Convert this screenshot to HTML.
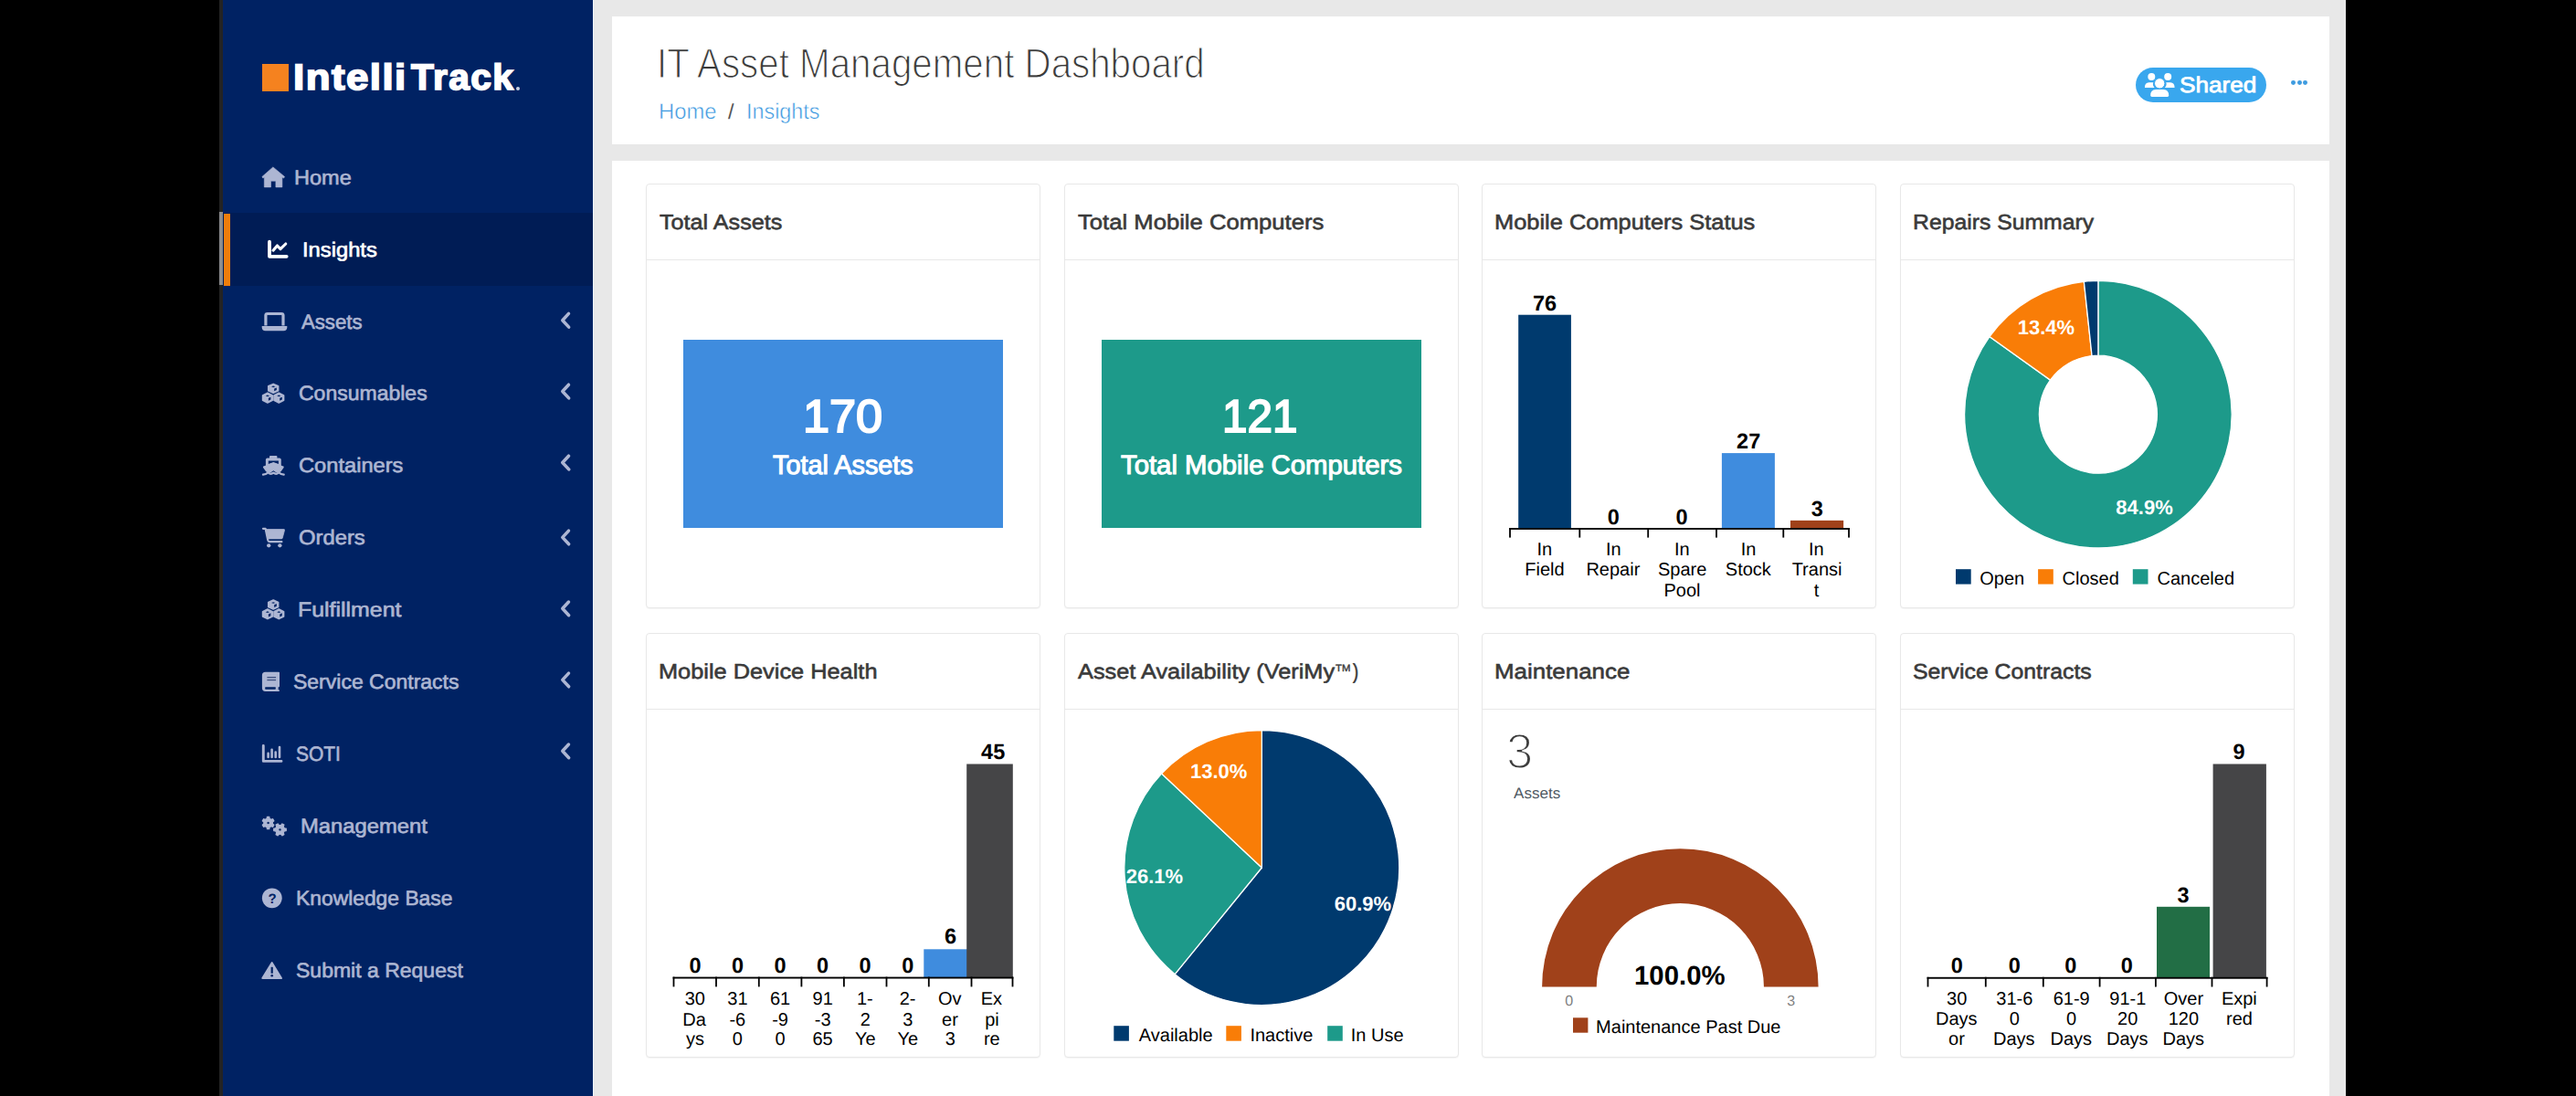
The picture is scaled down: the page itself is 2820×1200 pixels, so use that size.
<!DOCTYPE html>
<html lang="en"><head><meta charset="utf-8"><title>IT Asset Management Dashboard</title>
<style>
html,body{margin:0;padding:0;}
body{width:2820px;height:1200px;background:#000;position:relative;overflow:hidden;font-family:"Liberation Sans",sans-serif;text-rendering:geometricPrecision;}
.a{position:absolute;}
.t{position:absolute;white-space:nowrap;line-height:1;transform-origin:0 0;display:block;}
.card{position:absolute;box-sizing:border-box;background:#fff;border:1px solid #e8e8e8;border-radius:4px;width:432px;height:465px;box-shadow:0 1px 1px rgba(0,0,0,0.04);}
.card .hd{position:absolute;left:0;right:0;top:0;height:82px;border-bottom:1px solid #e8e8e8;}
svg text{font-family:"Liberation Sans",sans-serif;}
</style></head><body>
<div class="a" style="left:240px;top:0;width:4px;height:1200px;background:#232323;"></div>
<div class="a" style="left:240px;top:232px;width:4.5px;height:80px;background:#8c8c8e;"></div>
<div class="a" id="sidebar" style="left:244px;top:0;width:405px;height:1200px;background:#002263;"></div>
<div class="a" style="left:244px;top:233px;width:405px;height:79.5px;background:#001c55;"></div>
<div class="a" style="left:244.5px;top:233.5px;width:7.5px;height:79px;background:#ee7d0c;"></div>
<div class="a" id="content" style="left:649px;top:0;width:1919px;height:1200px;background:#e8e8e8;"></div>
<div class="a" style="left:649px;top:0;width:1.2px;height:1200px;background:#eef3fb;"></div>
<div class="a" id="header" style="left:670px;top:18px;width:1880px;height:140px;background:#fff;"></div>
<div class="a" id="panel" style="left:670px;top:176px;width:1880px;height:1024px;background:#fff;"></div>
<div class="a" style="left:287px;top:70px;width:29px;height:29.5px;background:#f5821f;"></div>
<span class="t " style="left:321.30px;top:66px;font-size:39.7px;color:#fff;font-weight:700;letter-spacing:1.3px;-webkit-text-stroke:1.7px #fff;transform:scaleX(1.1058);">Intelli</span>
<span class="t " style="left:450.44px;top:66px;font-size:39.7px;color:#fff;font-weight:700;letter-spacing:1.3px;-webkit-text-stroke:1.7px #fff;transform:scaleX(1.0266);">Track</span>
<div class="a" style="left:564.6px;top:94.8px;width:4.6px;height:4.6px;border-radius:50%;background:#c9d0e3;"></div>
<span class="t " style="left:321.54px;top:184px;font-size:22.4px;color:#adb6d2;-webkit-text-stroke:0.65px #adb6d2;transform:scaleX(1.0519);">Home</span>
<span class="t " style="left:330.99px;top:263px;font-size:22.4px;color:#fff;-webkit-text-stroke:0.65px #fff;transform:scaleX(1.0603);">Insights</span>
<span class="t " style="left:330.12px;top:342px;font-size:22.4px;color:#adb6d2;-webkit-text-stroke:0.65px #adb6d2;transform:scaleX(0.9900);">Assets</span>
<span class="t " style="left:326.77px;top:420px;font-size:22.4px;color:#adb6d2;-webkit-text-stroke:0.65px #adb6d2;transform:scaleX(1.0272);">Consumables</span>
<span class="t " style="left:326.74px;top:499px;font-size:22.4px;color:#adb6d2;-webkit-text-stroke:0.65px #adb6d2;transform:scaleX(1.0569);">Containers</span>
<span class="t " style="left:326.85px;top:578px;font-size:22.4px;color:#adb6d2;-webkit-text-stroke:0.65px #adb6d2;transform:scaleX(1.0632);">Orders</span>
<span class="t " style="left:325.93px;top:657px;font-size:22.4px;color:#adb6d2;-webkit-text-stroke:0.65px #adb6d2;transform:scaleX(1.1121);">Fulfillment</span>
<span class="t " style="left:321.39px;top:736px;font-size:22.4px;color:#adb6d2;-webkit-text-stroke:0.65px #adb6d2;transform:scaleX(1.0269);">Service Contracts</span>
<span class="t " style="left:324.08px;top:815px;font-size:22.4px;color:#adb6d2;-webkit-text-stroke:0.65px #adb6d2;transform:scaleX(0.9366);">SOTI</span>
<span class="t " style="left:328.92px;top:894px;font-size:22.4px;color:#adb6d2;-webkit-text-stroke:0.65px #adb6d2;transform:scaleX(1.0633);">Management</span>
<span class="t " style="left:323.50px;top:973px;font-size:22.4px;color:#adb6d2;-webkit-text-stroke:0.65px #adb6d2;transform:scaleX(1.0202);">Knowledge Base</span>
<span class="t " style="left:323.69px;top:1052px;font-size:22.4px;color:#adb6d2;-webkit-text-stroke:0.65px #adb6d2;transform:scaleX(1.0272);">Submit a Request</span>
<span class="t " style="left:718.95px;top:47px;font-size:45.8px;color:#3a3a3a;-webkit-text-stroke:1.25px #fff;transform:scaleX(0.8801);">IT Asset Management Dashboard</span>
<span class="t " style="left:720.84px;top:111px;font-size:24.0px;color:#3c98e0;-webkit-text-stroke:0.5px #fff;transform:scaleX(0.9925);">Home</span>
<span class="t " style="left:797.00px;top:111px;font-size:23.3px;color:#555;">/</span>
<span class="t " style="left:816.65px;top:111px;font-size:24.0px;color:#3c98e0;-webkit-text-stroke:0.5px #fff;transform:scaleX(0.9726);">Insights</span>
<div class="a" style="left:2338px;top:74px;width:142.5px;height:37.7px;border-radius:19px;background:#39a7ee;"></div>
<span class="t " style="left:2386.12px;top:82px;font-size:23.8px;color:#fff;-webkit-text-stroke:0.8px #fff;transform:scaleX(1.0993);">Shared</span>
<div class="a" style="left:2508.05px;top:88.2px;width:4.9px;height:4.9px;border-radius:50%;background:#3f9ce0;"></div>
<div class="a" style="left:2514.65px;top:88.2px;width:4.9px;height:4.9px;border-radius:50%;background:#3f9ce0;"></div>
<div class="a" style="left:2521.3500000000004px;top:88.2px;width:4.9px;height:4.9px;border-radius:50%;background:#3f9ce0;"></div>
<div class="card" style="left:707px;top:201px;"><div class="hd"></div></div>
<span class="t " style="left:722.00px;top:232px;font-size:23.1px;color:#3a3a3a;-webkit-text-stroke:0.6px #3a3a3a;transform:scaleX(1.0904);">Total Assets</span>
<div class="card" style="left:1165px;top:201px;"><div class="hd"></div></div>
<span class="t " style="left:1179.79px;top:232px;font-size:23.1px;color:#3a3a3a;-webkit-text-stroke:0.6px #3a3a3a;transform:scaleX(1.1102);">Total Mobile Computers</span>
<div class="card" style="left:1622px;top:201px;"><div class="hd"></div></div>
<span class="t " style="left:1635.97px;top:232px;font-size:23.1px;color:#3a3a3a;-webkit-text-stroke:0.6px #3a3a3a;transform:scaleX(1.1004);">Mobile Computers Status</span>
<div class="card" style="left:2080px;top:201px;"><div class="hd"></div></div>
<span class="t " style="left:2093.82px;top:232px;font-size:23.1px;color:#3a3a3a;-webkit-text-stroke:0.6px #3a3a3a;transform:scaleX(1.0719);">Repairs Summary</span>
<div class="card" style="left:707px;top:693px;"><div class="hd"></div></div>
<span class="t " style="left:720.87px;top:724px;font-size:23.1px;color:#3a3a3a;-webkit-text-stroke:0.6px #3a3a3a;transform:scaleX(1.0975);">Mobile Device Health</span>
<div class="card" style="left:1165px;top:693px;"><div class="hd"></div></div>
<span class="t " style="left:1179.90px;top:724px;font-size:23.1px;color:#3a3a3a;-webkit-text-stroke:0.6px #3a3a3a;transform:scaleX(1.0968);">Asset Availability (VeriMy</span>
<span class="t " style="left:1462.27px;top:727px;font-size:10.6px;color:#3a3a3a;-webkit-text-stroke:0.4px #3a3a3a;transform:scaleX(1.0701);">TM</span>
<span class="t " style="left:1480.91px;top:724px;font-size:23.1px;color:#3a3a3a;-webkit-text-stroke:0.6px #3a3a3a;transform:scaleX(0.8005);">)</span>
<div class="card" style="left:1622px;top:693px;"><div class="hd"></div></div>
<span class="t " style="left:1635.93px;top:724px;font-size:23.1px;color:#3a3a3a;-webkit-text-stroke:0.6px #3a3a3a;transform:scaleX(1.1217);">Maintenance</span>
<div class="card" style="left:2080px;top:693px;"><div class="hd"></div></div>
<span class="t " style="left:2093.78px;top:724px;font-size:23.1px;color:#3a3a3a;-webkit-text-stroke:0.6px #3a3a3a;transform:scaleX(1.0742);">Service Contracts</span>
<div class="a" style="left:748px;top:372px;width:350px;height:206px;background:#3f8cde;"></div>
<span class="t " style="left:879.28px;top:431px;font-size:50.4px;color:#fff;-webkit-text-stroke:2.0px #fff;transform:scaleX(1.0361);">170</span>
<span class="t " style="left:846.47px;top:495px;font-size:29.4px;color:#fff;-webkit-text-stroke:1.1px #fff;transform:scaleX(0.9805);">Total Assets</span>
<div class="a" style="left:1206px;top:372px;width:349.5px;height:206px;background:#1d9a8a;"></div>
<span class="t " style="left:1337.70px;top:431px;font-size:50.4px;color:#fff;-webkit-text-stroke:2.0px #fff;transform:scaleX(0.9799);">121</span>
<span class="t " style="left:1227.26px;top:495px;font-size:29.4px;color:#fff;-webkit-text-stroke:1.1px #fff;transform:scaleX(0.9976);">Total Mobile Computers</span>
<span class="t " style="left:1649.29px;top:797px;font-size:53.9px;color:#3d3d3d;-webkit-text-stroke:2.0px #fff;transform:scaleX(0.9765);">3</span>
<span class="t " style="left:1657.40px;top:861px;font-size:16.7px;color:#505a64;transform:scaleX(1.0239);">Assets</span>
<svg class="a" style="left:0;top:0;" width="2820" height="1200" viewBox="0 0 2820 1200">
<rect x="1662.20" y="344.70" width="57.70" height="233.80" fill="#003a6e"/>
<rect x="1884.90" y="496.10" width="58.00" height="82.40" fill="#3f8cde"/>
<rect x="1960.00" y="569.85" width="58.10" height="8.65" fill="#a0411a"/>
<rect x="1652.10" y="578.00" width="372.80" height="1.90" fill="#000"/>
<rect x="1652.10" y="578.00" width="1.80" height="10.60" fill="#000"/>
<rect x="1728.40" y="578.00" width="1.80" height="10.60" fill="#000"/>
<rect x="1803.30" y="578.00" width="1.80" height="10.60" fill="#000"/>
<rect x="1878.10" y="578.00" width="1.80" height="10.60" fill="#000"/>
<rect x="1951.40" y="578.00" width="1.80" height="10.60" fill="#000"/>
<rect x="2023.10" y="578.00" width="1.80" height="10.60" fill="#000"/>
<text x="1678.00" y="339.80" font-size="23.5" fill="#000" font-weight="700">76</text>
<text x="1759.68" y="573.80" font-size="23.5" fill="#000" font-weight="700">0</text>
<text x="1834.38" y="573.80" font-size="23.5" fill="#000" font-weight="700">0</text>
<text x="1901.12" y="490.70" font-size="23.5" fill="#000" font-weight="700">27</text>
<text x="1982.70" y="564.75" font-size="23.5" fill="#000" font-weight="700">3</text>
<text x="1682.50" y="607.60" font-size="20" fill="#000">In</text>
<text x="1669.30" y="630.00" font-size="20" fill="#000">Field</text>
<text x="1757.90" y="607.60" font-size="20" fill="#000">In</text>
<text x="1736.40" y="630.00" font-size="20" fill="#000">Repair</text>
<text x="1833.00" y="607.60" font-size="20" fill="#000">In</text>
<text x="1814.95" y="630.00" font-size="20" fill="#000">Spare</text>
<text x="1821.45" y="652.60" font-size="20" fill="#000">Pool</text>
<text x="1905.70" y="607.60" font-size="20" fill="#000">In</text>
<text x="1888.85" y="630.00" font-size="20" fill="#000">Stock</text>
<text x="1980.00" y="607.60" font-size="20" fill="#000">In</text>
<text x="1961.65" y="630.00" font-size="20" fill="#000">Transi</text>
<text x="1985.75" y="652.60" font-size="20" fill="#000">t</text>
<path d="M2296.90,307.40A146.3,146.3 0 1 1 2177.94,368.54L2244.46,416.15A64.5,64.5 0 1 0 2296.90,389.20Z" fill="#1d9a8a" stroke="#fff" stroke-width="1.3"/>
<path d="M2177.94,368.54A146.3,146.3 0 0 1 2281.35,308.23L2290.05,389.57A64.5,64.5 0 0 0 2244.46,416.15Z" fill="#f97d07" stroke="#fff" stroke-width="1.3"/>
<path d="M2281.35,308.23A146.3,146.3 0 0 1 2296.90,307.40L2296.90,389.20A64.5,64.5 0 0 0 2290.05,389.57Z" fill="#003a6e" stroke="#fff" stroke-width="1.3"/>
<text x="2208.73" y="365.70" font-size="22" fill="#fff" font-weight="700">13.4%</text>
<text x="2316.36" y="562.50" font-size="22" fill="#fff" font-weight="700">84.9%</text>
<rect x="2141.00" y="623.20" width="16.70" height="16.40" fill="#003a6e"/>
<rect x="2231.10" y="623.20" width="16.70" height="16.40" fill="#f97d07"/>
<rect x="2334.80" y="623.20" width="16.70" height="16.40" fill="#1d9a8a"/>
<text x="2167.30" y="639.60" font-size="20" fill="#000">Open</text>
<text x="2257.60" y="639.60" font-size="20" fill="#000">Closed</text>
<text x="2361.50" y="639.60" font-size="20" fill="#000">Canceled</text>
<rect x="1011.30" y="1039.30" width="58.00" height="31.20" fill="#3f8cde"/>
<rect x="1058.20" y="836.50" width="50.60" height="234.00" fill="#454547"/>
<rect x="736.60" y="1069.60" width="372.80" height="1.90" fill="#000"/>
<rect x="736.60" y="1069.60" width="1.80" height="10.80" fill="#000"/>
<rect x="783.10" y="1069.60" width="1.80" height="10.80" fill="#000"/>
<rect x="829.90" y="1069.60" width="1.80" height="10.80" fill="#000"/>
<rect x="876.50" y="1069.60" width="1.80" height="10.80" fill="#000"/>
<rect x="923.00" y="1069.60" width="1.80" height="10.80" fill="#000"/>
<rect x="969.60" y="1069.60" width="1.80" height="10.80" fill="#000"/>
<rect x="1015.90" y="1069.60" width="1.80" height="10.80" fill="#000"/>
<rect x="1062.60" y="1069.60" width="1.80" height="10.80" fill="#000"/>
<rect x="1107.60" y="1069.60" width="1.80" height="10.80" fill="#000"/>
<text x="754.38" y="1065.30" font-size="23.5" fill="#000" font-weight="700">0</text>
<text x="800.88" y="1065.30" font-size="23.5" fill="#000" font-weight="700">0</text>
<text x="847.38" y="1065.30" font-size="23.5" fill="#000" font-weight="700">0</text>
<text x="893.98" y="1065.30" font-size="23.5" fill="#000" font-weight="700">0</text>
<text x="940.58" y="1065.30" font-size="23.5" fill="#000" font-weight="700">0</text>
<text x="987.28" y="1065.30" font-size="23.5" fill="#000" font-weight="700">0</text>
<text x="1033.88" y="1033.40" font-size="23.5" fill="#000" font-weight="700">6</text>
<text x="1074.08" y="831.10" font-size="23.5" fill="#000" font-weight="700">45</text>
<text x="749.65" y="1100.30" font-size="20" fill="#000">30</text>
<text x="747.25" y="1122.60" font-size="20" fill="#000">Da</text>
<text x="751.10" y="1144.30" font-size="20" fill="#000">ys</text>
<text x="796.35" y="1100.30" font-size="20" fill="#000">31</text>
<text x="798.45" y="1122.60" font-size="20" fill="#000">-6</text>
<text x="801.80" y="1144.30" font-size="20" fill="#000">0</text>
<text x="842.95" y="1100.30" font-size="20" fill="#000">61</text>
<text x="845.20" y="1122.60" font-size="20" fill="#000">-9</text>
<text x="848.50" y="1144.30" font-size="20" fill="#000">0</text>
<text x="889.60" y="1100.30" font-size="20" fill="#000">91</text>
<text x="891.75" y="1122.60" font-size="20" fill="#000">-3</text>
<text x="889.50" y="1144.30" font-size="20" fill="#000">65</text>
<text x="938.00" y="1100.30" font-size="20" fill="#000">1-</text>
<text x="941.65" y="1122.60" font-size="20" fill="#000">2</text>
<text x="936.10" y="1144.30" font-size="20" fill="#000">Ye</text>
<text x="984.75" y="1100.30" font-size="20" fill="#000">2-</text>
<text x="988.15" y="1122.60" font-size="20" fill="#000">3</text>
<text x="982.60" y="1144.30" font-size="20" fill="#000">Ye</text>
<text x="1027.00" y="1100.30" font-size="20" fill="#000">Ov</text>
<text x="1031.10" y="1122.60" font-size="20" fill="#000">er</text>
<text x="1034.65" y="1144.30" font-size="20" fill="#000">3</text>
<text x="1073.65" y="1100.30" font-size="20" fill="#000">Ex</text>
<text x="1078.25" y="1122.60" font-size="20" fill="#000">pi</text>
<text x="1076.90" y="1144.30" font-size="20" fill="#000">re</text>
<path d="M1381.3,950L1381.30,799.50A150.5,150.5 0 1 1 1286.18,1066.63Z" fill="#003a6e" stroke="#fff" stroke-width="1.3"/>
<path d="M1381.3,950L1286.18,1066.63A150.5,150.5 0 0 1 1271.59,846.98Z" fill="#1d9a8a" stroke="#fff" stroke-width="1.3"/>
<path d="M1381.3,950L1271.59,846.98A150.5,150.5 0 0 1 1381.30,799.50Z" fill="#f97d07" stroke="#fff" stroke-width="1.3"/>
<text x="1303.03" y="851.70" font-size="22" fill="#fff" font-weight="700">13.0%</text>
<text x="1232.70" y="967.10" font-size="22" fill="#fff" font-weight="700">26.1%</text>
<text x="1460.70" y="997.00" font-size="22" fill="#fff" font-weight="700">60.9%</text>
<rect x="1219.30" y="1123.20" width="16.60" height="16.50" fill="#003a6e"/>
<rect x="1342.30" y="1123.20" width="16.60" height="16.50" fill="#f97d07"/>
<rect x="1453.20" y="1123.20" width="16.60" height="16.50" fill="#1d9a8a"/>
<text x="1246.80" y="1139.70" font-size="20" fill="#000">Available</text>
<text x="1368.40" y="1139.70" font-size="20" fill="#000">Inactive</text>
<text x="1478.80" y="1139.70" font-size="20" fill="#000">In Use</text>
<path d="M1688.1,1080.4A151.25,151.25 0 0 1 1990.6,1080.4L1930.9499999999998,1080.4A91.6,91.6 0 0 0 1747.75,1080.4Z" fill="#a0411a"/>
<text x="1789.05" y="1078.30" font-size="29.33" fill="#000" font-weight="700">100.0%</text>
<text x="1713.37" y="1101.20" font-size="16" fill="#808080">0</text>
<text x="1956.31" y="1101.20" font-size="16" fill="#808080">3</text>
<rect x="1722.00" y="1114.30" width="16.40" height="16.40" fill="#a0411a"/>
<text x="1747.10" y="1130.70" font-size="20" fill="#000">Maintenance Past Due</text>
<rect x="2361.00" y="992.80" width="58.00" height="77.70" fill="#226e45"/>
<rect x="2422.60" y="836.50" width="58.30" height="234.00" fill="#454547"/>
<rect x="2109.60" y="1069.80" width="372.90" height="1.90" fill="#000"/>
<rect x="2109.60" y="1069.80" width="1.80" height="10.70" fill="#000"/>
<rect x="2172.90" y="1069.80" width="1.80" height="10.70" fill="#000"/>
<rect x="2235.90" y="1069.80" width="1.80" height="10.70" fill="#000"/>
<rect x="2297.70" y="1069.80" width="1.80" height="10.70" fill="#000"/>
<rect x="2359.00" y="1069.80" width="1.80" height="10.70" fill="#000"/>
<rect x="2420.60" y="1069.80" width="1.80" height="10.70" fill="#000"/>
<rect x="2480.70" y="1069.80" width="1.80" height="10.70" fill="#000"/>
<text x="2135.68" y="1065.40" font-size="23.5" fill="#000" font-weight="700">0</text>
<text x="2198.78" y="1065.40" font-size="23.5" fill="#000" font-weight="700">0</text>
<text x="2260.18" y="1065.40" font-size="23.5" fill="#000" font-weight="700">0</text>
<text x="2321.78" y="1065.40" font-size="23.5" fill="#000" font-weight="700">0</text>
<text x="2383.60" y="987.60" font-size="23.5" fill="#000" font-weight="700">3</text>
<text x="2444.38" y="831.00" font-size="23.5" fill="#000" font-weight="700">9</text>
<text x="2131.05" y="1099.90" font-size="20" fill="#000">30</text>
<text x="2118.95" y="1122.20" font-size="20" fill="#000">Days</text>
<text x="2133.10" y="1144.30" font-size="20" fill="#000">or</text>
<text x="2185.30" y="1099.90" font-size="20" fill="#000">31-6</text>
<text x="2199.70" y="1122.20" font-size="20" fill="#000">0</text>
<text x="2182.05" y="1144.30" font-size="20" fill="#000">Days</text>
<text x="2247.65" y="1099.90" font-size="20" fill="#000">61-9</text>
<text x="2262.10" y="1122.20" font-size="20" fill="#000">0</text>
<text x="2244.45" y="1144.30" font-size="20" fill="#000">Days</text>
<text x="2309.30" y="1099.90" font-size="20" fill="#000">91-1</text>
<text x="2318.05" y="1122.20" font-size="20" fill="#000">20</text>
<text x="2306.05" y="1144.30" font-size="20" fill="#000">Days</text>
<text x="2368.75" y="1099.90" font-size="20" fill="#000">Over</text>
<text x="2373.65" y="1122.20" font-size="20" fill="#000">120</text>
<text x="2367.45" y="1144.30" font-size="20" fill="#000">Days</text>
<text x="2431.90" y="1099.90" font-size="20" fill="#000">Expi</text>
<text x="2437.05" y="1122.20" font-size="20" fill="#000">red</text>
</svg>
<svg class="a" style="left:0;top:0;" width="2820" height="1200" viewBox="0 0 2820 1200">
<path d="M298.9,182.9L311.6,193.5L310.5,195.1L308.9,193.9L308.9,204.9L301.9,204.9L301.9,198.2L296.5,198.2L296.5,204.9L289.3,204.9L289.3,193.9L287.9,195.1L286.9,193.5Z" fill="#adb6d3" stroke="#adb6d3" stroke-width="0.6" stroke-linejoin="round"/>
<path d="M295,264.7L295,280.8L313.7,280.8" fill="none" stroke="#fff" stroke-width="3.8" stroke-linecap="round" stroke-linejoin="round"/>
<path d="M299,274.2L303.5,269L307,272.6L312.8,267" fill="none" stroke="#fff" stroke-width="3.1" stroke-linecap="round" stroke-linejoin="round"/>
<path d="M290.9,356.4L290.9,345.3Q290.9,343.5 292.7,343.5L308.2,343.5Q310,343.5 310,345.3L310,356.4" fill="none" stroke="#adb6d3" stroke-width="3.2"/>
<path d="M286.7,357.1L314.3,357.1L314.3,358.3Q314.3,362.2 310.4,362.2L290.6,362.2Q286.7,362.2 286.7,358.3Z" fill="#adb6d3"/>
<path d="M292.90,430.25L298.20,432.93L298.20,438.28L292.90,440.95L287.60,438.28L287.60,432.93Z" fill="#adb6d3" stroke="#adb6d3" stroke-width="1.6" stroke-linejoin="round"/><path d="M292.90,432.55L295.02,433.46L292.90,434.37L290.78,433.46Z" fill="#002263"/><path d="M293.85,435.81L296.40,434.64L296.40,437.53L293.85,438.81Z" fill="#002263"/><path d="M305.30,430.25L310.60,432.93L310.60,438.28L305.30,440.95L300.00,438.28L300.00,432.93Z" fill="#adb6d3" stroke="#adb6d3" stroke-width="1.6" stroke-linejoin="round"/><path d="M305.30,432.55L307.42,433.46L305.30,434.37L303.18,433.46Z" fill="#002263"/><path d="M306.25,435.81L308.80,434.64L308.80,437.53L306.25,438.81Z" fill="#002263"/><path d="M299.20,420.40L304.65,422.85L304.65,427.75L299.20,430.20L293.75,427.75L293.75,422.85Z" fill="#adb6d3" stroke="#adb6d3" stroke-width="1.6" stroke-linejoin="round"/><path d="M299.20,422.51L301.38,423.34L299.20,424.17L297.02,423.34Z" fill="#002263"/><path d="M300.18,425.50L302.80,424.42L302.80,427.06L300.18,428.24Z" fill="#002263"/>
<path d="M292.90,666.95L298.20,669.62L298.20,674.97L292.90,677.65L287.60,674.97L287.60,669.62Z" fill="#adb6d3" stroke="#adb6d3" stroke-width="1.6" stroke-linejoin="round"/><path d="M292.90,669.25L295.02,670.16L292.90,671.07L290.78,670.16Z" fill="#002263"/><path d="M293.85,672.51L296.40,671.34L296.40,674.23L293.85,675.51Z" fill="#002263"/><path d="M305.30,666.95L310.60,669.62L310.60,674.97L305.30,677.65L300.00,674.97L300.00,669.62Z" fill="#adb6d3" stroke="#adb6d3" stroke-width="1.6" stroke-linejoin="round"/><path d="M305.30,669.25L307.42,670.16L305.30,671.07L303.18,670.16Z" fill="#002263"/><path d="M306.25,672.51L308.80,671.34L308.80,674.23L306.25,675.51Z" fill="#002263"/><path d="M299.20,657.10L304.65,659.55L304.65,664.45L299.20,666.90L293.75,664.45L293.75,659.55Z" fill="#adb6d3" stroke="#adb6d3" stroke-width="1.6" stroke-linejoin="round"/><path d="M299.20,659.21L301.38,660.04L299.20,660.87L297.02,660.04Z" fill="#002263"/><path d="M300.18,662.20L302.80,661.12L302.80,663.76L300.18,664.94Z" fill="#002263"/>
<rect x="295" y="498.9" width="8.4" height="3.6" rx="0.8" fill="#adb6d3"/>
<path d="M290.9,510.5L290.9,503.6Q290.9,501.6 292.9,501.6L305.8,501.6Q307.8,501.6 307.8,503.6L307.8,510.5Z" fill="#adb6d3"/>
<path d="M293.8,504.6L304.9,504.6L304.9,508L299.35,505.9L293.8,508Z" fill="#002263"/>
<path d="M299.35,506.6L310.2,510.6Q311,511 310.6,511.9L307.6,516.2Q303.6,519 299.35,515.2Q295.1,519 291.1,516.2L288.1,511.9Q287.7,511 288.5,510.6Z" fill="#adb6d3"/>
<path d="M288,519.6Q291,519.4 293.6,517.4Q296.4,519.9 299.35,517.6Q302.3,519.9 305.1,517.4Q307.7,519.4 310.7,519.6" fill="none" stroke="#adb6d3" stroke-width="2.3" stroke-linecap="round" stroke-linejoin="round"/>
<path d="M288,578.8L290.6,578.8L293.3,591.6Q293.6,593.2 295.2,593.2L308.4,593.2" fill="none" stroke="#adb6d3" stroke-width="2.2" stroke-linecap="round" stroke-linejoin="round"/>
<path d="M291,579.6L310.9,579.6Q311.8,579.6 311.5,580.6L309.2,589.2Q309,589.9 308.2,589.9L293.2,589.9Z" fill="#adb6d3" stroke="#adb6d3" stroke-width="0.8" stroke-linejoin="round"/>
<circle cx="294.2" cy="597.3" r="2.15" fill="#adb6d3"/><circle cx="306.4" cy="597.3" r="2.15" fill="#adb6d3"/>
<path d="M290.6,735.7L305.2,735.7Q306,735.7 306,736.5L306,751.6Q306,752.3 305.3,752.3L304.7,752.3L304.7,755.2L305.4,755.2Q306,755.3 306,756.1Q306,756.9 305.3,756.9L290.6,756.9Q286.9,756.9 286.9,753.2L286.9,739.4Q286.9,735.7 290.6,735.7Z" fill="#adb6d3"/>
<rect x="290.2" y="752.2" width="11.6" height="2.5" rx="0.6" fill="#002263"/>
<rect x="292.4" y="741" width="9.7" height="1.3" fill="#3d4f7f"/><rect x="292.4" y="743.9" width="9.7" height="1.3" fill="#3d4f7f"/>
<path d="M288.3,816.4L288.3,833.4L308,833.4" fill="none" stroke="#adb6d3" stroke-width="2.9" stroke-linecap="round" stroke-linejoin="round"/>
<path d="M293.6,824.9L293.6,829" fill="none" stroke="#adb6d3" stroke-width="2.6" stroke-linecap="round"/>
<path d="M297.6,820.8L297.6,829" fill="none" stroke="#adb6d3" stroke-width="2.6" stroke-linecap="round"/>
<path d="M301.7,823.6L301.7,829" fill="none" stroke="#adb6d3" stroke-width="2.6" stroke-linecap="round"/>
<path d="M306,818L306,829" fill="none" stroke="#adb6d3" stroke-width="2.6" stroke-linecap="round"/>
<path d="M292.09,896.34L292.41,894.41L294.79,894.41L295.11,896.34L296.88,897.36L298.72,896.68L299.90,898.73L298.39,899.98L298.39,902.02L299.90,903.27L298.72,905.32L296.88,904.64L295.11,905.66L294.79,907.59L292.41,907.59L292.09,905.66L290.32,904.64L288.48,905.32L287.30,903.27L288.81,902.02L288.81,899.98L287.30,898.73L288.48,896.68L290.32,897.36ZM291.80,901.00a1.8,1.8 0 1 0 3.6,0a1.8,1.8 0 1 0 -3.6,0Z" fill="#adb6d3" fill-rule="evenodd" stroke="#adb6d3" stroke-width="1.2" stroke-linejoin="round"/>
<path d="M307.54,903.51L308.84,901.91L310.95,903.13L310.22,905.05L311.26,906.85L313.29,907.18L313.29,909.62L311.26,909.95L310.22,911.75L310.95,913.67L308.84,914.89L307.54,913.29L305.46,913.29L304.16,914.89L302.05,913.67L302.78,911.75L301.74,909.95L299.71,909.62L299.71,907.18L301.74,906.85L302.78,905.05L302.05,903.13L304.16,901.91L305.46,903.51ZM304.70,908.40a1.8,1.8 0 1 0 3.6,0a1.8,1.8 0 1 0 -3.6,0Z" fill="#adb6d3" fill-rule="evenodd" stroke="#adb6d3" stroke-width="1.2" stroke-linejoin="round"/>
<circle cx="297.8" cy="983.3" r="10.9" fill="#adb6d3"/>
<text x="293.6" y="988.6" font-size="15" font-weight="700" fill="#002263">?</text>
<path d="M297.7,1054.2L307.9,1071L287.4,1071Z" fill="#adb6d3" stroke="#adb6d3" stroke-width="2.2" stroke-linejoin="round"/>
<rect x="296.6" y="1058.8" width="2.2" height="7" rx="0.6" fill="#002263"/><circle cx="297.7" cy="1068.2" r="1.3" fill="#002263"/>
<path d="M622.5,343.4L615.8,350.7L622.7,358.1" fill="none" stroke="#adb6d3" stroke-width="3.5" stroke-linecap="round" stroke-linejoin="round"/>
<path d="M622.5,421.2L615.8,428.5L622.7,435.9" fill="none" stroke="#adb6d3" stroke-width="3.5" stroke-linecap="round" stroke-linejoin="round"/>
<path d="M622.5,499.2L615.8,506.5L622.7,513.9" fill="none" stroke="#adb6d3" stroke-width="3.5" stroke-linecap="round" stroke-linejoin="round"/>
<path d="M622.5,581.1L615.8,588.4L622.7,595.8" fill="none" stroke="#adb6d3" stroke-width="3.5" stroke-linecap="round" stroke-linejoin="round"/>
<path d="M622.5,659.0L615.8,666.3L622.7,673.7" fill="none" stroke="#adb6d3" stroke-width="3.5" stroke-linecap="round" stroke-linejoin="round"/>
<path d="M622.5,737.1L615.8,744.4L622.7,751.8" fill="none" stroke="#adb6d3" stroke-width="3.5" stroke-linecap="round" stroke-linejoin="round"/>
<path d="M622.5,815.0L615.8,822.3L622.7,829.7" fill="none" stroke="#adb6d3" stroke-width="3.5" stroke-linecap="round" stroke-linejoin="round"/>
<g fill="#fff">
<circle cx="2355.3" cy="84" r="4"/><circle cx="2373.2" cy="84" r="4"/>
<path d="M2347.9,95.9Q2347.9,90.3 2352.5,90.2L2357.3,90.2Q2356,93 2358.6,95.9Z"/>
<path d="M2380.6,95.9Q2380.6,90.3 2376,90.2L2371.2,90.2Q2372.5,93 2369.9,95.9Z"/>
<circle cx="2364.2" cy="91.3" r="5.7" stroke="#39a7ee" stroke-width="1"/>
<path d="M2354.2,104.6Q2354.2,98 2360,98L2368.4,98Q2374.2,98 2374.2,104.6Q2374.2,106 2372.8,106L2355.6,106Q2354.2,106 2354.2,104.6Z"/>
</g>
</svg>
</body></html>
